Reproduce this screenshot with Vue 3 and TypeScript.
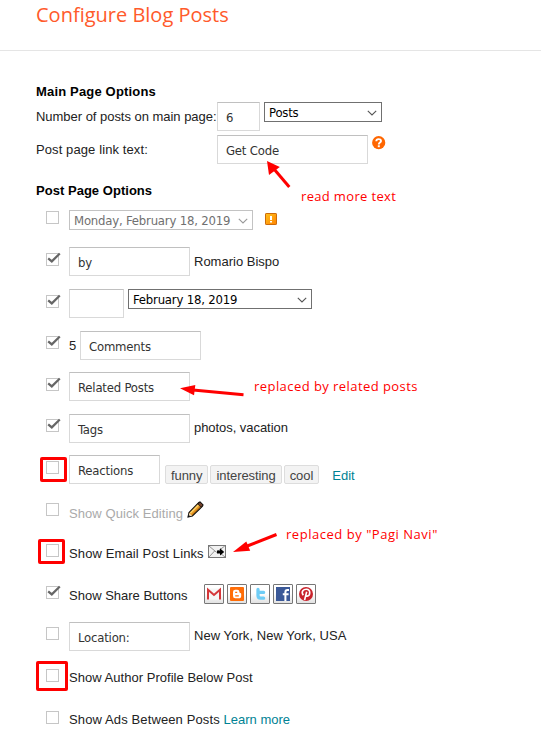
<script setup lang="ts">
interface Note { id: string; text: string }

const reactions: string[] = ['funny', 'interesting', 'cool']
const notes: Note[] = [
  { id: 'read-more', text: 'read more text' },
  { id: 'related', text: 'replaced by related posts' },
  { id: 'pagination', text: 'replaced by "Pagi Navi"' },
]
const rings: string[] = ['reactions', 'email', 'author']
const tick = 'M2.2 6.3 L5.8 9.4 L13.8 1.5'
</script>

<template>
  <div class="page">
    <header class="header"><h1>Configure Blog Posts</h1></header>

    <main class="body">
      <h2>Main Page Options</h2>
      <div class="line">
        <span class="caption">Number of posts on main page:</span>
        <span class="input w43">6</span>
        <span class="select w118">Posts
          <svg class="chev" width="10" height="6" viewBox="0 0 10 6"><path d="M.8 .8 L5 5 L9.2 .8" /></svg>
        </span>
      </div>
      <div class="line">
        <span class="caption link-caption">Post page link text:</span>
        <span class="input w151">Get Code</span>
        <svg class="help" width="14" height="14" viewBox="0 0 14 14">
          <circle cx="6.7" cy="6.7" r="6.6" fill="#f60" />
          <path d="M4.3 5.2 C4.3 2.4 9 2.4 9 5.1 C9 6.6 6.8 6.6 6.8 8.4" fill="none" stroke="#fff" stroke-width="1.9" />
          <rect x="5.8" y="9.3" width="2" height="1.9" fill="#fff" />
        </svg>
      </div>

      <h2 class="second">Post Page Options</h2>
      <div class="options">
        <div class="row">
          <span class="check" />
          <span class="select disabled w184">Monday, February 18, 2019
            <svg class="chev" width="10" height="6" viewBox="0 0 10 6"><path d="M.8 .8 L5 5 L9.2 .8" /></svg>
          </span>
          <svg class="warn" width="12" height="12" viewBox="0 0 12 12">
            <defs>
              <linearGradient id="amber" x1="0" y1="0" x2="1" y2="1">
                <stop offset="0" stop-color="#ffc21c" /><stop offset="1" stop-color="#ff8200" />
              </linearGradient>
            </defs>
            <rect x=".5" y=".5" width="11" height="11" rx=".6" fill="url(#amber)" stroke="#cc6a08" />
            <path d="M5 3 H7 V7 H5 Z M5 8 H7 V9.6 H5 Z" fill="#fff" />
          </svg>
        </div>

        <div class="row">
          <span class="check"><svg class="tick" width="16" height="13"><path :d="tick" /></svg></span>
          <span class="input w121">by</span>
          <span class="text mid">Romario Bispo</span>
        </div>

        <div class="row">
          <span class="check"><svg class="tick" width="16" height="13"><path :d="tick" /></svg></span>
          <span class="input w55" />
          <span class="select w184">February 18, 2019
            <svg class="chev" width="10" height="6" viewBox="0 0 10 6"><path d="M.8 .8 L5 5 L9.2 .8" /></svg>
          </span>
        </div>

        <div class="row short">
          <span class="check up"><svg class="tick" width="16" height="13"><path :d="tick" /></svg></span>
          <span class="text count">5</span>
          <span class="input w121">Comments</span>
        </div>

        <div class="row">
          <span class="check"><svg class="tick" width="16" height="13"><path :d="tick" /></svg></span>
          <span class="input w121">Related Posts</span>
        </div>

        <div class="row short">
          <span class="check up"><svg class="tick" width="16" height="13"><path :d="tick" /></svg></span>
          <span class="input w121">Tags</span>
          <span class="text mid high samples">photos, vacation</span>
        </div>

        <div class="row">
          <span class="check" />
          <span class="input w91">Reactions</span>
          <span class="tags"><span v-for="r in reactions" :key="r" class="tag">{{ r }}</span></span>
          <a class="link edit">Edit</a>
        </div>

        <div class="row">
          <span class="check" />
          <span class="text low faded">Show Quick Editing</span>
          <svg class="pencil" width="17" height="17" viewBox="0 0 17 17">
            <path d="M1 16 L2 11.5 L11.8 1.4 L13 1 L16 4 L15.5 5.3 L5.4 15 Z" fill="#e89c26" stroke="#111" stroke-width="1.1" />
            <path d="M3.4 12 L12 3.5" stroke="#ffd56c" stroke-width="1.3" />
            <path d="M5.2 13.7 L13.8 5.1" stroke="#b96a10" stroke-width="1" />
            <path d="M10.8 3 L13 1 L16 4 L14 6.2 Z" fill="#70402b" stroke="#111" stroke-width=".8" />
            <path d="M1.5 15.5 L2.3 12 L5 14.7 Z" fill="#e7d4b6" />
            <path d="M.7 16.3 L1.4 13.7 L3.5 15.6 Z" fill="#111" />
          </svg>
        </div>

        <div class="row short">
          <span class="check up" />
          <span class="text wide">Show Email Post Links</span>
          <svg class="mail" width="18" height="13" viewBox="0 0 18 13">
            <rect x=".5" y=".5" width="17" height="12" fill="#f1f1f1" stroke="#777" />
            <path d="M1 1 L8.4 7.2 L16.8 1 M1 12 L6.6 6 M17 12 L12 8" fill="none" stroke="#888" stroke-width=".9" />
            <path d="M9 5.4 H12 V3.2 L16.2 6.9 L12 10.6 V8.4 H9 Z" fill="#000" />
          </svg>
        </div>

        <div class="row">
          <span class="check"><svg class="tick" width="16" height="13"><path :d="tick" /></svg></span>
          <span class="text tall">Show Share Buttons</span>
          <span class="share">
            <span class="btn">
              <svg width="16" height="16" viewBox="0 0 16 16">
                <rect x="1" y="2.5" width="14" height="11" fill="#f6f6f6" />
                <path d="M2 13.5 V3.7 L8 9 L14 3.7 V13.5" fill="none" stroke="#d5373a" stroke-width="2" />
              </svg>
            </span>
            <span class="btn">
              <svg width="16" height="16" viewBox="0 0 16 16">
                <rect x="1" y="1" width="14" height="14" rx="1" fill="#ff6d08" />
                <path d="M4 6 Q4 3.7 6.3 3.7 H8.2 Q10.4 3.7 10.4 5.8 Q10.4 7 11.3 7 Q12.2 7 12.2 8 V9.7 Q12.2 12.3 9.7 12.3 H6.3 Q4 12.3 4 10 Z" fill="#fff" />
                <path d="M6.2 6.3 H8.2 M6.2 9.8 H9.8" stroke="#ff6d08" stroke-width="1.2" />
              </svg>
            </span>
            <span class="btn">
              <svg width="16" height="16" viewBox="0 0 16 16">
                <path d="M6 3.4 V9.6 Q6 12.2 8.6 12.2 H11.6 M6 6.4 H11.6" fill="none" stroke="#6fcdf6" stroke-width="3.3" stroke-linecap="round" />
              </svg>
            </span>
            <span class="btn">
              <svg width="16" height="16" viewBox="0 0 16 16">
                <rect x="1" y="1" width="14" height="14" fill="#3b5998" />
                <path d="M10.4 15 V6.2 Q10.4 4 12.4 4 H14 M7.8 8.3 H13.6" fill="none" stroke="#fff" stroke-width="2" />
              </svg>
            </span>
            <span class="btn">
              <svg width="16" height="16" viewBox="0 0 16 16">
                <circle cx="8" cy="8" r="7" fill="#c8232c" />
                <path d="M5.3 9.2 C2.5 5.6 5.8 3.2 8.4 3.3 C13.2 3.5 12.2 10 9.2 10.1 C8.2 10.1 7.6 9.5 7.6 9.5 M8.7 5.8 L6.6 14" fill="none" stroke="#fff" stroke-width="1.6" />
              </svg>
            </span>
          </span>
        </div>

        <div class="row short">
          <span class="check up" />
          <span class="input w121">Location:</span>
          <span class="text mid high place">New York, New York, USA</span>
        </div>

        <div class="row">
          <span class="check" />
          <span class="text author">Show Author Profile Below Post</span>
        </div>

        <div class="row last">
          <span class="check" />
          <span class="text"><span class="wide">Show Ads Between Posts </span><a class="link">Learn more</a></span>
        </div>
      </div>
    </main>

    <svg class="arrows" width="541" height="735" viewBox="0 0 541 735">
      <path d="M289.3 187 L274 169" /><polygon points="267,161 269,175 279.8,167" />
      <path d="M243.5 394.7 L193 390" /><polygon points="180,388.3 195.3,385 194,395.3" />
      <path d="M276.5 534.5 L246 546.5" /><polygon points="233,552 246.3,541.5 250.2,550.8" />
    </svg>
    <span v-for="r in rings" :key="r" class="ring" :class="`ring-${r}`" />
    <span v-for="n in notes" :key="n.id" class="note" :class="`note-${n.id}`">{{ n.text }}</span>
  </div>
</template>

<style>
body { background: #fff; }
</style>

<style scoped>
.page { position: relative; width: 541px; height: 735px; overflow: hidden; background: #fff; color: #222; font: 13px/15px "Liberation Sans", Arial, sans-serif; }
.page *, .page { box-sizing: border-box; }
.header { height: 51px; padding: 1px 0 0 36px; border-bottom: 1px solid #e5e5e5; }
h1 { margin: 0; font: 400 20px/27px "Open Sans", sans-serif; color: #ff5a2b; }
.body { padding: 33px 0 0 36px; }
h2 { margin: 0; height: 18px; font-size: 13px; line-height: 15px; font-weight: 700; color: #000; letter-spacing: .17px; }
h2.second { height: 22px; margin-top: 15px; letter-spacing: .03px; }
.line { display: flex; align-items: flex-start; height: 33px; }
.caption { width: 181px; padding-top: 7px; white-space: nowrap; letter-spacing: -.03px; }
.link-caption { letter-spacing: .1px; }
.input, .select { flex: none; display: block; white-space: nowrap; font: 13px/15px "DejaVu Sans Condensed", "DejaVu Sans", sans-serif; letter-spacing: -.2px; }
.input { height: 29px; padding: 7px 0 0 8px; border: 1px solid #d9d9d9; border-top-color: #c0c0c0; color: #333; }
.select { display: flex; justify-content: space-between; height: 20px; padding: 2px 4px 0 4px; border: 1px solid #707070; color: #000; }
.chev { margin-top: 5px; fill: none; stroke: #555; stroke-width: 1.1; }
.disabled { margin-top: 5px; border-color: #c3c3c3; color: #707070; }
.disabled .chev { stroke: #999; }
.w43 { width: 43px; margin-right: 4px; }
.w55 { width: 55px; margin-right: 4px; }
.w91 { width: 91px; }
.w118 { width: 118px; }
.w121 { width: 121px; }
.w151 { width: 151px; }
.w184 { width: 184px; }
.help { margin: 1px 0 0 4px; }
.warn { margin: 8px 0 0 12px; }

.row { display: flex; align-items: flex-start; height: 42px; padding-left: 10px; }
.row.short { height: 41px; }
.row.last { height: 30px; }
.check { flex: none; width: 13px; height: 13px; margin: 6px 10px 0 0; border: 1px solid #c6c6c6; background: #fff; }
.check.up { margin-top: 5px; }
.tick { display: block; margin: -2px 0 0 -1px; overflow: visible; fill: none; stroke: #666; stroke-width: 2.2; }
.text { padding-top: 7px; white-space: nowrap; }
.text.mid { padding-left: 4px; }
.text.high { padding-top: 6px; }
.text.tall { padding-top: 8px; }
.text.low { padding-top: 9px; }
.wide { letter-spacing: .12px; }
.author { letter-spacing: .03px; }
.samples { letter-spacing: -.05px; }
.count { width: 11px; }
.place { letter-spacing: .06px; }
.faded { color: #aaa; letter-spacing: .07px; }
.link { color: #008294; }
.tags { display: flex; gap: 2px; padding: 10px 0 0 5px; }
.tag { height: 19px; padding: 2px 5px 0; border: 1px solid #ddd; border-radius: 2px; background: #f3f3f3; color: #444; letter-spacing: -.07px; }
.edit { padding: 13px 0 0 13px; }
.pencil { margin: 4px 0 0 4px; }
.mail { margin: 6px 0 0 4px; }
.share { display: flex; gap: 3px; padding: 4px 0 0 16px; }
.btn { width: 20px; height: 20px; padding: 1px; border: 1px solid #777; border-radius: 1px; background: linear-gradient(#fff 45%, #e2e2e2); }
.btn svg { display: block; }

.arrows { position: absolute; left: 0; top: 0; fill: #f00; }
.arrows path { stroke: #f00; stroke-width: 3; }
.ring { position: absolute; width: 27px; height: 25px; border: 3px solid #f00; border-radius: 2px; }
.ring-reactions { left: 40px; top: 457px; }
.ring-email { left: 38px; top: 539px; }
.ring-author { left: 36px; top: 661px; width: 32px; height: 30px; }
.note { position: absolute; white-space: nowrap; font: 13px/18px "Open Sans", sans-serif; color: #f00; letter-spacing: .44px; }
.note-read-more { left: 301px; top: 187px; letter-spacing: .34px; }
.note-related { left: 254px; top: 377px; }
.note-pagination { left: 286px; top: 525px; letter-spacing: .53px; }
</style>
